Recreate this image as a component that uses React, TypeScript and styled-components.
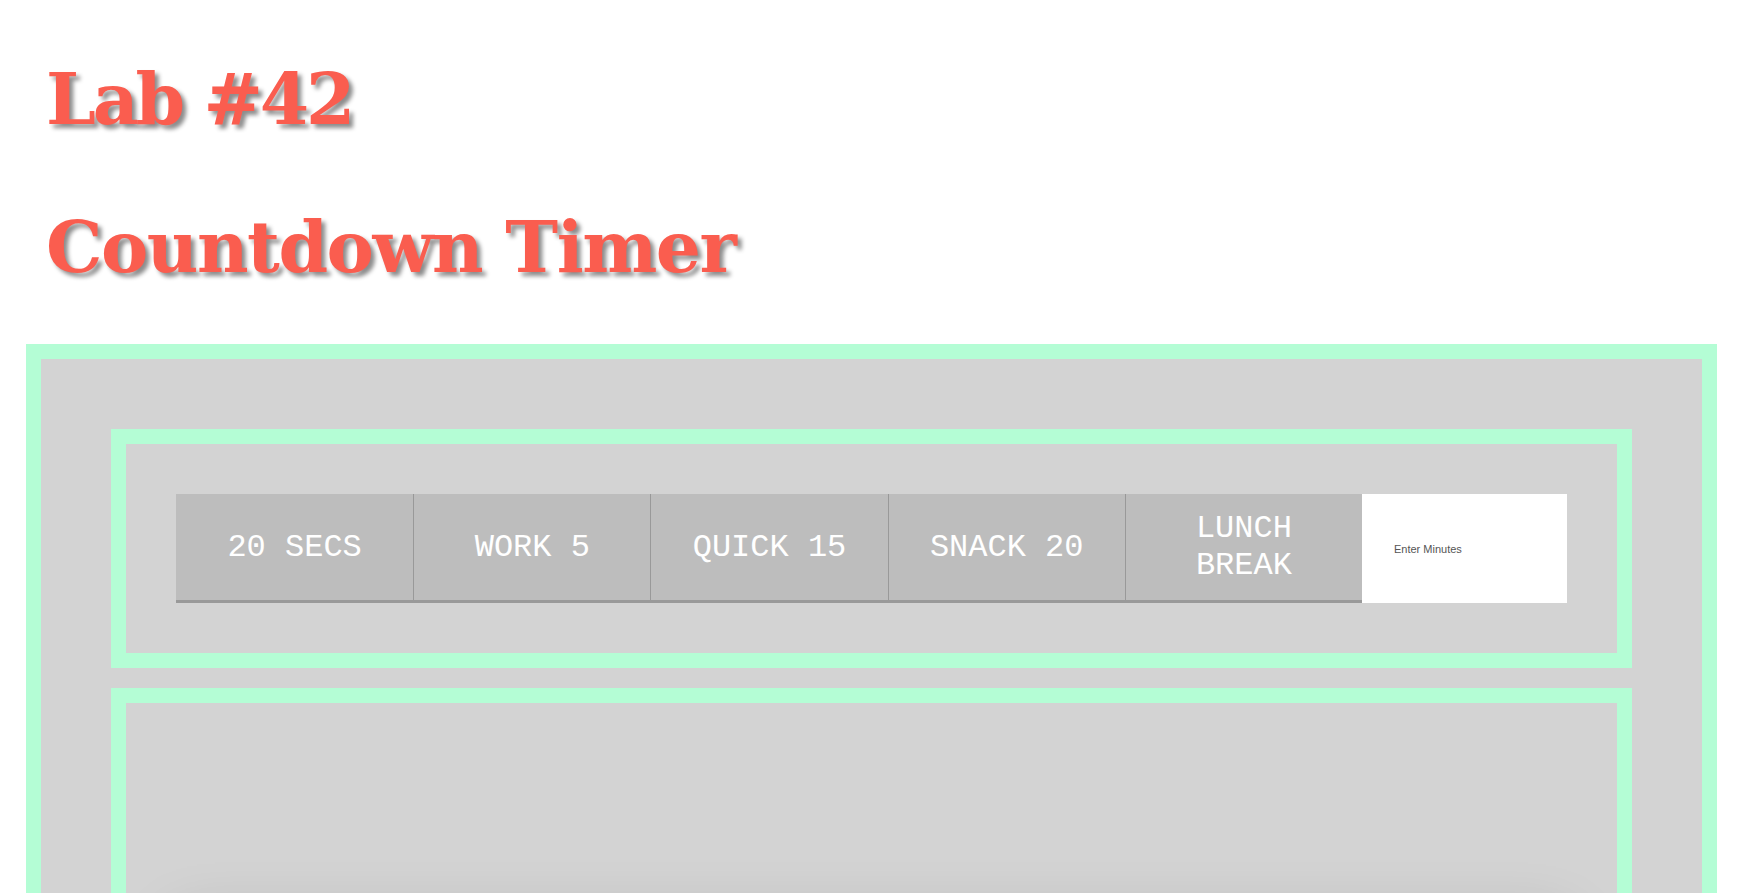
import React from "react";
import styled, { createGlobalStyle } from "styled-components";

const GlobalStyle = createGlobalStyle`
  html, body {
    margin: 0;
    padding: 0;
    background: #ffffff;
  }
  body {
    font-family: "Liberation Sans", Arial, sans-serif;
  }
  * {
    box-sizing: border-box;
  }
`;

const Page = styled.div`
  padding: 64px 27px 40px 26px;
`;

const Title = styled.h1<{ $tight?: boolean }>`
  margin: 0 0 77px 20px;
  font-family: "DejaVu Serif", "Liberation Serif", serif;
  font-weight: bold;
  font-size: 71px;
  line-height: 71px;
  letter-spacing: ${(p) => (p.$tight ? "-3.2px" : "-1.5px")};
  color: #fa5d4f;
  text-shadow: 4px 4px 4px rgba(0, 0, 0, 0.45);

  &:last-of-type {
    margin-bottom: 61px;
  }
`;

const Frame = styled.section`
  border: 15px solid #b4fdd5;
  background: #d3d3d3;
  padding: 70px;
`;

const Panel = styled.div<{ $tall?: boolean }>`
  border: 15px solid #b4fdd5;
  background: #d3d3d3;
  padding: 50px;
  margin-bottom: 20px;
  min-height: ${(p) => (p.$tall ? "600px" : "auto")};
`;

const Bar = styled.div`
  display: grid;
  grid-template-columns: repeat(5, 1fr) 205px;
  height: 109px;
`;

const PresetButton = styled.button`
  display: flex;
  align-items: center;
  justify-content: center;
  padding: 0 20px;
  margin: 0;
  border: none;
  border-bottom: 3px solid #999999;
  background: #bdbdbd;
  color: #ffffff;
  font-family: "Liberation Mono", "Courier New", monospace;
  font-size: 32px;
  line-height: 37px;
  text-align: center;
  cursor: pointer;

  & + & {
    border-left: 1px solid #999999;
  }
`;

const MinutesInput = styled.input`
  border: none;
  outline: none;
  background: #ffffff;
  padding: 0 0 0 32px;
  margin: 0;
  height: 109px;
  font-family: "Liberation Sans", Arial, sans-serif;
  font-size: 11px;
  color: #333;

  &::placeholder {
    color: #555555;
  }
`;

const Display = styled.div`
  margin-top: 172px;
  height: 300px;
  background: #d3d3d3;
  box-shadow: 0 0 60px 0 rgba(0, 0, 0, 0.2);
`;

const presets = ["20 SECS", "WORK 5", "QUICK 15", "SNACK 20", "LUNCH BREAK"];

export default function App() {
  return (
    <>
      <GlobalStyle />
      <Page>
        <Title $tight>Lab #42</Title>
        <Title>Countdown Timer</Title>
        <Frame>
          <Panel>
            <Bar>
              {presets.map((p) => (
                <PresetButton key={p}>{p}</PresetButton>
              ))}
              <MinutesInput type="text" placeholder="Enter Minutes" />
            </Bar>
          </Panel>
          <Panel $tall>
            <Display />
          </Panel>
        </Frame>
      </Page>
    </>
  );
}
